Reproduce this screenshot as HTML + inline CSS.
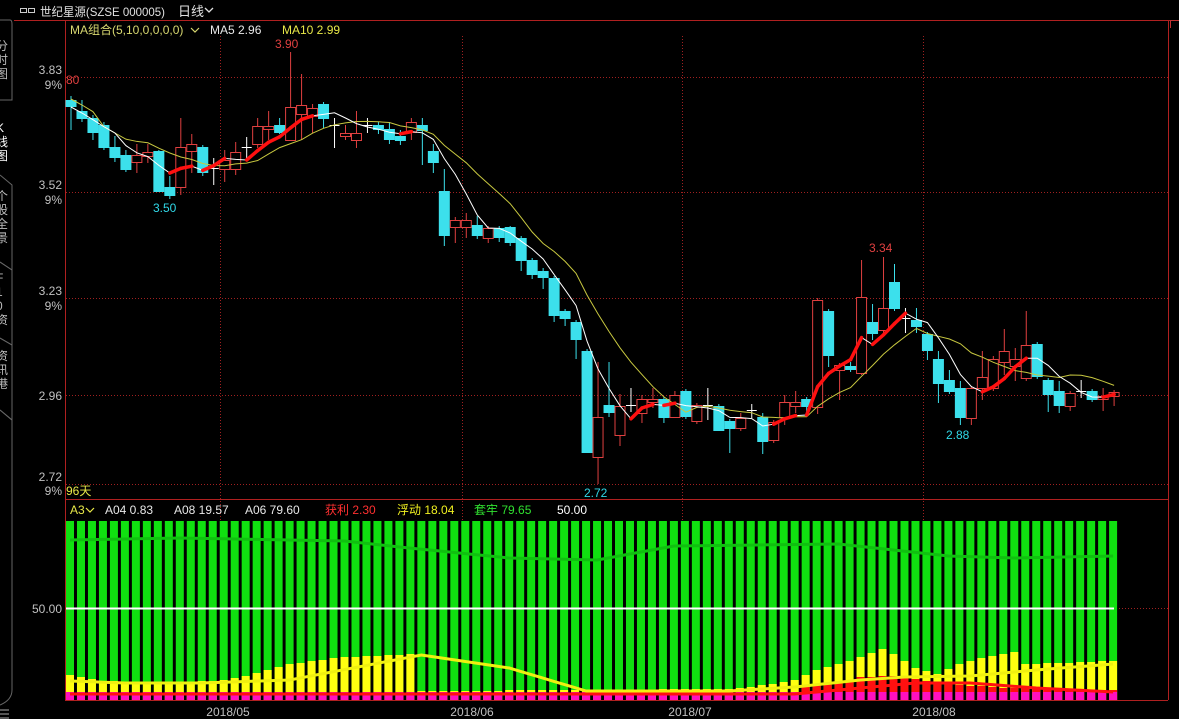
<!DOCTYPE html><html><head><meta charset="utf-8"><style>
body{margin:0;background:#000;width:1179px;height:719px;overflow:hidden;font-family:"Liberation Sans","Noto Sans CJK SC",sans-serif}
svg{position:absolute;left:0;top:0}
</style></head><body>
<svg id="s" width="1179" height="719" xmlns="http://www.w3.org/2000/svg" font-family="Liberation Sans, Noto Sans CJK SC, sans-serif" font-size="12">
<rect width="1179" height="719" fill="#000"/>
<g fill="none" stroke="#ccc" stroke-width="1"><rect x="20.5" y="8.5" width="6" height="4"/><rect x="28.5" y="8.5" width="6" height="4"/></g>
<text x="40" y="16" fill="#e0e0e0" font-size="12" textLength="125" lengthAdjust="spacingAndGlyphs">世纪星源(SZSE 000005)</text>
<text x="178" y="16" fill="#e0e0e0" font-size="13">日线</text>
<polyline points="205,8 209,12 213,8" fill="none" stroke="#e0e0e0" stroke-width="1.3"/>
<line x1="14" y1="20.5" x2="1179" y2="20.5" stroke="#b02020"/>
<path d="M1170,20.5 H1179 M1170.5,20 V28" stroke="#c03030"/>
<g fill="none" stroke="#666"><path d="M0,20 H10 Q12,20 12,24 V100 H0"/><path d="M0,175 L12,185 V270 L0,262"/><path d="M0,262 L12,270 V345 L0,338"/><path d="M0,338 L12,345 V420 L0,410"/><path d="M0,410 L12,420 V690 Q12,700 0,705"/></g>
<g fill="#bbb" font-size="12"><text x="-4" y="50">分</text><text x="-4" y="64">时</text><text x="-4" y="78">图</text><text x="-4" y="132" fill="#fff">K</text><text x="-4" y="146" fill="#fff">线</text><text x="-4" y="160" fill="#fff">图</text><text x="-4" y="200">个</text><text x="-4" y="214">股</text><text x="-4" y="228">全</text><text x="-4" y="242">景</text><text x="-4" y="282">F</text><text x="-4" y="296">1</text><text x="-4" y="310">0</text><text x="-4" y="324">资</text><text x="-4" y="360">资</text><text x="-4" y="374">讯</text><text x="-4" y="388">港</text></g>
<path d="M0,710 H9 M0,714 H9 M0,718 H9" stroke="#aaa"/>
<line x1="65.5" y1="20" x2="65.5" y2="700" stroke="#b02020"/>
<line x1="1168.5" y1="20" x2="1168.5" y2="700" stroke="#b02020"/>
<line x1="65" y1="499.5" x2="1168" y2="499.5" stroke="#b02020"/>
<line x1="65" y1="700.5" x2="1168" y2="700.5" stroke="#b02020"/>
<g stroke="#a02020" stroke-dasharray="1,2"><line x1="66" y1="77.5" x2="1168" y2="77.5"/><line x1="66" y1="192.5" x2="1168" y2="192.5"/><line x1="66" y1="298.5" x2="1168" y2="298.5"/><line x1="66" y1="395.5" x2="1168" y2="395.5"/><line x1="66" y1="484.5" x2="1168" y2="484.5"/><line x1="66" y1="608.5" x2="1168" y2="608.5"/>
<line x1="220.5" y1="36" x2="220.5" y2="700"/><line x1="462.5" y1="36" x2="462.5" y2="700"/><line x1="682.5" y1="36" x2="682.5" y2="700"/><line x1="923.5" y1="36" x2="923.5" y2="700"/></g>
<g fill="#c0c0c0" text-anchor="end"><text x="62" y="74">3.83</text><text x="62" y="89">9%</text><text x="62" y="189">3.52</text><text x="62" y="204">9%</text><text x="62" y="295">3.23</text><text x="62" y="310">9%</text><text x="62" y="400">2.96</text><text x="62" y="481">2.72</text><text x="62" y="495">9%</text><text x="62" y="613">50.00</text></g>
<g fill="#c0c0c0" text-anchor="middle" font-size="12"><text x="228" y="716">2018/05</text><text x="472" y="716">2018/06</text><text x="690" y="716">2018/07</text><text x="934" y="716">2018/08</text></g>
<g id="main"></g>
<g id="sub"></g>
<text x="70" y="34" fill="#d8d870">MA组合(5,10,0,0,0,0)</text><polyline points="191,28 195,32 199,28" fill="none" stroke="#d8d870" stroke-width="1.2"/>
<text x="210" y="34" fill="#e8e8e8">MA5 2.96</text><text x="282" y="34" fill="#e8e848">MA10 2.99</text>
<text x="66" y="84" fill="#e04040">80</text><text x="275" y="48" fill="#e04040">3.90</text><text x="153" y="212" fill="#30d8e8">3.50</text><text x="584" y="497" fill="#30d8e8">2.72</text><text x="869" y="252" fill="#e04040">3.34</text><text x="946" y="439" fill="#30d8e8">2.88</text>
<text x="66" y="495" fill="#e8e848">96天</text>
<text x="70" y="514" fill="#e8e848">A3</text><polyline points="86,508 90,512 94,508" fill="none" stroke="#e8e848" stroke-width="1.2"/>
<text x="105" y="514" fill="#e8e8e8">A04 0.83</text><text x="174" y="514" fill="#e8e8e8">A08 19.57</text><text x="245" y="514" fill="#e8e8e8">A06 79.60</text>
<text x="325" y="514" fill="#ff3030">获利 2.30</text><text x="397" y="514" fill="#f0f020">浮动 18.04</text><text x="474" y="514" fill="#30e030">套牢 79.65</text><text x="557" y="514" fill="#fff">50.00</text>
</svg>
<script>
var NS="http://www.w3.org/2000/svg";
function el(p,t,a){var e=document.createElementNS(NS,t);for(var k in a)e.setAttribute(k,a[k]);p.appendChild(e);return e;}
var C=[["c",100,107,96,130],["c",111,119,100,122],["c",118,133,115,140],["c",125,148,122,150],["c",147,158,136,162],["c",155,170,150,172],["r",155,162,144,173],["r",152,156,144,163],["c",151,192,150,192],["c",187,196,176,199],["r",147,187,118,195],["r",144,151,134,173],["c",147,173,145,176],["w",168,168,158,185],["r",160,169,150,182],["r",152,169,142,175],["w",147,147,137,160],["r",126,144,118,148],["r",126,129,111,140],["c",125,133,118,134],["r",107,140,52,140],["r",105,114,74,140],["r",108,116,104,133],["c",104,119,102,128],["w",125,125,118,148],["r",133,136,125,140],["r",133,140,111,148],["w",125,125,118,133],["c",125,130,122,134],["c",129,140,122,144],["c",136,141,130,145],["r",122,132,118,140],["c",125,131,118,165],
["c",151,163,144,173],["c",191,236,169,246],["r",220,227,217,243],["r",220,227,213,238],["c",225,236,216,239],["r",228,238,226,243],["c",228,238,226,242],["c",227,243,226,246],["c",238,261,236,271],["c",260,275,258,279],["c",271,278,268,289],["c",278,316,276,322],["c",311,319,309,326],["c",322,340,320,359],["c",351,453,349,453],["r",417,457,362,484],["c",405,413,362,417],["r",406,435,394,446],["w",405,405,388,412],["r",399,413,395,423],["r",399,402,388,408],["c",399,418,397,423],["r",395,417,391,418],["c",391,417,389,419],["r",405,421,403,424],["w",405,405,388,420],["c",406,431,404,431],["c",421,429,419,453],["r",418,428,413,431],["w",410,410,404,418],
["c",417,442,413,454],["r",422,440,420,443],["r",402,417,395,425],["r",402,406,391,413],["c",399,407,397,413],["r",300,407,298,414],["c",311,356,309,367],["r",365,370,363,400],["c",366,370,362,372],["r",297,373,260,375],["c",322,334,304,340],["r",308,330,257,334],["c",282,309,264,311],["w",318,318,308,333],["c",320,327,308,333],["c",334,351,332,360],["c",359,384,351,403],["c",380,392,370,394],["c",388,418,381,425],["r",388,418,386,425],["r",377,388,351,400],["r",359,388,356,391],["r",351,362,329,375],["r",359,366,348,381],["r",345,378,311,381],["c",344,377,342,379],["c",380,395,378,412],["c",391,406,381,413],["r",393,406,391,411],["w",391,391,380,398],["c",391,400,389,402],["r",396,399,388,411],["r",392,396,390,406]];
var g=document.getElementById("main");
var X=function(i){return 71+i*10.98};
var close=[];
C.forEach(function(c,i){var x=X(i);var col=c[0]=="c"?"#3ce0ec":c[0]=="r"?"#e04040":"#ffffff";
 el(g,"line",{x1:x,y1:c[3],x2:x,y2:c[4],stroke:col,"stroke-width":1});
 if(c[0]=="w"){el(g,"line",{x1:x-5,y1:c[1]+.5,x2:x+5,y2:c[1]+.5,stroke:col});}
 else if(c[0]=="c"){el(g,"rect",{x:x-5.5,y:c[1],width:11,height:Math.max(2,c[2]-c[1]),fill:col});}
 else{el(g,"rect",{x:x-5,y:c[1]+.5,width:10,height:Math.max(2,c[2]-c[1]),fill:"#000",stroke:col});}
 close.push(c[0]=="c"?c[2]:c[1]);});
function ma(n){var r=[];for(var i=0;i<close.length;i++){var s=0,k=0;for(var j=Math.max(0,i-n+1);j<=i;j++){s+=close[j];k++;}r.push(s/k);}return r;}
var m5=ma(5),m10=ma(10);
el(g,"polyline",{points:m10.map(function(v,i){return X(i)+","+(v-8*(i<3?1:0))}).join(" "),fill:"none",stroke:"#c8c840","stroke-width":1});
el(g,"polyline",{points:m5.map(function(v,i){return X(i)+","+v}).join(" "),fill:"none",stroke:"#ffffff","stroke-width":1});
for(var i=1;i<m5.length;i++){if(m5[i]<m5[i-1]-2&&i>5)el(g,"line",{x1:X(i-1),y1:m5[i-1],x2:X(i),y2:m5[i],stroke:"#ff1010","stroke-width":3.5,"stroke-linecap":"round"});}
var sg=document.getElementById("sub");
function interp(pts,i){for(var k=0;k<pts.length-1;k++){if(i>=pts[k][0]&&i<=pts[k+1][0]){var t=(i-pts[k][0])/(pts[k+1][0]-pts[k][0]);return pts[k][1]+t*(pts[k+1][1]-pts[k][1]);}}return pts[pts.length-1][1];}
var Y=[[0,675],[1,677],[3,681],[8,683],[14,680],[16,676],[20,664],[24,658],[31,654],[32,691],[60,689],[64,684],[66,680],[67,675],[68,670],[71,661],[74,649],[75,654],[77,668],[79,674],[81,664],[83,658],[86,652],[87,664],[95,661]];
var R=[[0,692],[66,692],[67,686],[70,682],[72,677],[75,676],[80,684],[85,688],[95,690]];
var YL=[[0,681],[5,683],[12,683],[20,680],[32,655],[40,668],[47,691],[60,691],[66,687],[72,680],[76,677],[82,676],[88,670],[95,664]];
var GL=[[0,540],[10,538],[25,541],[30,547],[40,558],[48,560],[55,546],[70,544],[80,556],[86,558],[95,556]];
var RL=[[0,694],[66,694],[72,688],[77,683],[82,683],[88,688],[95,692]];
for(var i=0;i<96;i++){var x=66+i*10.98;
 el(sg,"rect",{x:x,y:521,width:8,height:179,fill:"#10e010"});
 var y=Math.round(interp(Y,i));el(sg,"rect",{x:x,y:y,width:8,height:700-y,fill:"#ffff10"});
 var r=Math.round(interp(R,i));if(r<692)el(sg,"rect",{x:x,y:r,width:8,height:700-r,fill:"#ff1010"});
 el(sg,"rect",{x:x,y:692,width:8,height:8,fill:"#ff10c0"});}
el(sg,"line",{x1:66,y1:608.5,x2:1114,y2:608.5,stroke:"#fff","stroke-width":2});
function pl(P,col,w){var a=[];for(var i=0;i<96;i++)a.push((70+i*10.98)+","+interp(P,i));el(sg,"polyline",{points:a.join(" "),fill:"none",stroke:col,"stroke-width":w});}
pl(GL,"#10c010",3);pl(YL,"#f0f010",3);pl(RL,"#ff1010",3);
</script>
</body></html>
